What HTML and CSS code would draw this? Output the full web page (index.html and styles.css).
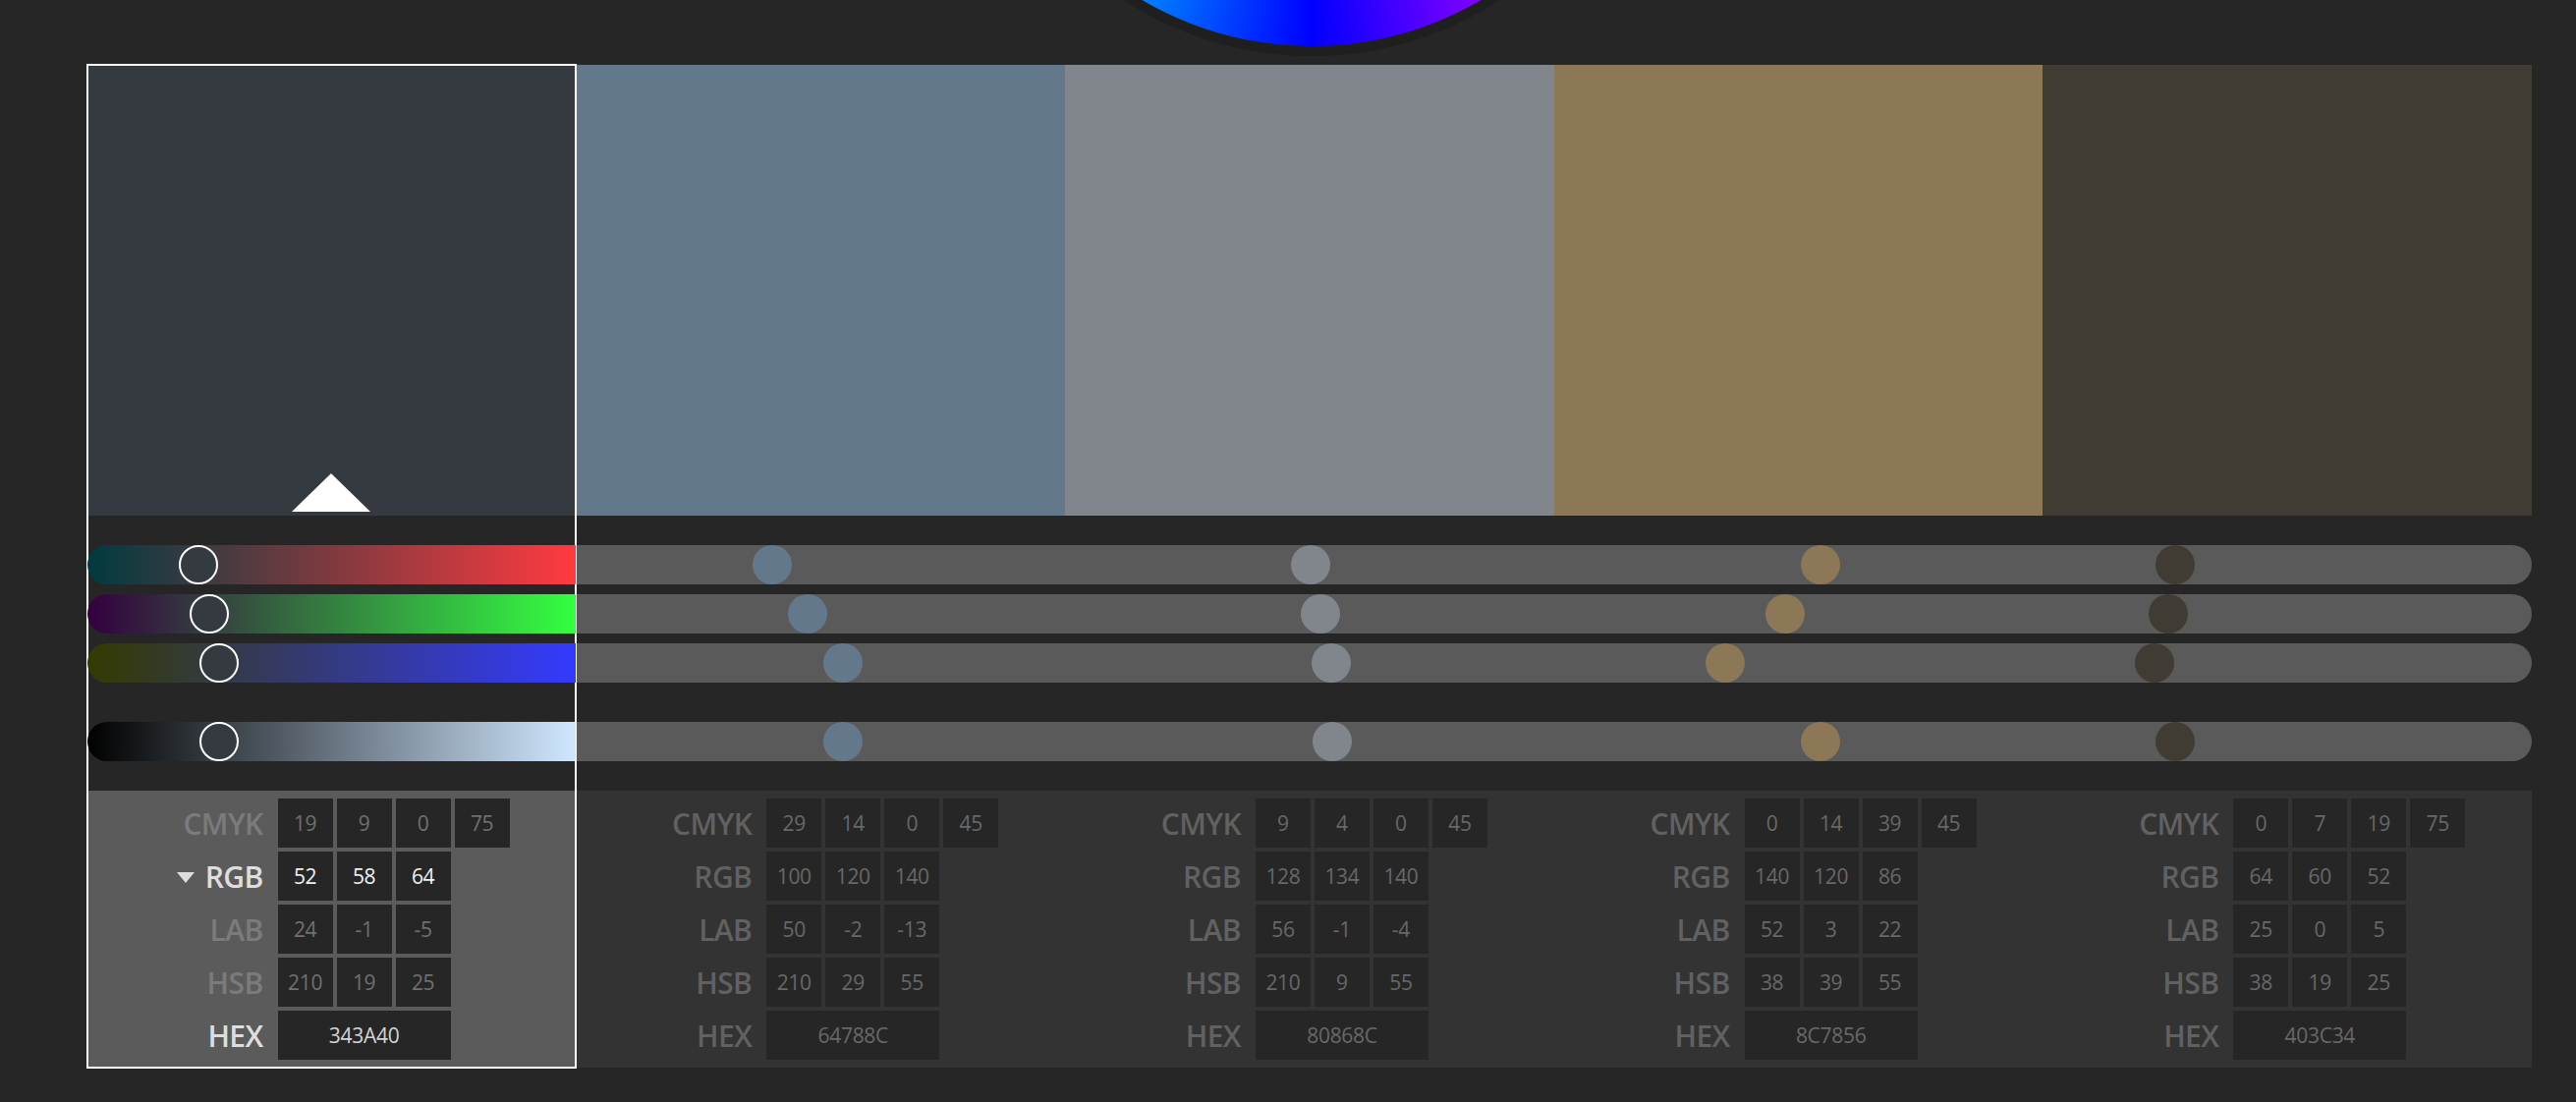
FILE: index.html
```html
<!DOCTYPE html>
<html>
<head>
<meta charset="utf-8">
<link rel="stylesheet" href="styles.css">
</head>
<body>
<div class="wheel"></div>
<div class="palette">

  <div class="col sel" style="--c:#343A40">
    <div class="swatch"><div class="pointer"></div></div>
    <div class="sliders">
      <div class="track" style="background:linear-gradient(to right, rgb(0,58,64), rgb(255,58,64))"><span class="knob" style="left:calc((100% - 40px) * 0.2039)"></span></div>
      <div class="track" style="background:linear-gradient(to right, rgb(52,0,64), rgb(52,255,64))"><span class="knob" style="left:calc((100% - 40px) * 0.2275)"></span></div>
      <div class="track" style="background:linear-gradient(to right, rgb(52,58,0), rgb(52,58,255))"><span class="knob" style="left:calc((100% - 40px) * 0.2510)"></span></div>
      <div class="track lum" style="background:linear-gradient(to right, #000, rgb(207,231,255))"><span class="knob" style="left:calc((100% - 40px) * 0.25)"></span></div>
    </div>
    <div class="panel">
      <div class="lbl">CMYK</div><div class="val">19</div><div class="val">9</div><div class="val">0</div><div class="val">75</div>
      <div class="lbl on"><span class="caret"></span>RGB</div><div class="val on">52</div><div class="val on">58</div><div class="val on">64</div>
      <div class="lbl">LAB</div><div class="val">24</div><div class="val">-1</div><div class="val">-5</div>
      <div class="lbl">HSB</div><div class="val">210</div><div class="val">19</div><div class="val">25</div>
      <div class="lbl on">HEX</div><div class="val hex on">343A40</div>
    </div>
  </div>

  <div class="col" style="--c:#64788C">
    <div class="swatch"></div>
    <div class="sliders">
      <div class="track"><span class="knob" style="left:calc((100% - 40px) * 0.3922)"></span></div>
      <div class="track"><span class="knob" style="left:calc((100% - 40px) * 0.4706)"></span></div>
      <div class="track"><span class="knob" style="left:calc((100% - 40px) * 0.5490)"></span></div>
      <div class="track lum"><span class="knob" style="left:calc((100% - 40px) * 0.55)"></span></div>
    </div>
    <div class="panel">
      <div class="lbl">CMYK</div><div class="val">29</div><div class="val">14</div><div class="val">0</div><div class="val">45</div>
      <div class="lbl">RGB</div><div class="val">100</div><div class="val">120</div><div class="val">140</div>
      <div class="lbl">LAB</div><div class="val">50</div><div class="val">-2</div><div class="val">-13</div>
      <div class="lbl">HSB</div><div class="val">210</div><div class="val">29</div><div class="val">55</div>
      <div class="lbl">HEX</div><div class="val hex">64788C</div>
    </div>
  </div>

  <div class="col" style="--c:#80868C">
    <div class="swatch"></div>
    <div class="sliders">
      <div class="track"><span class="knob" style="left:calc((100% - 40px) * 0.5020)"></span></div>
      <div class="track"><span class="knob" style="left:calc((100% - 40px) * 0.5255)"></span></div>
      <div class="track"><span class="knob" style="left:calc((100% - 40px) * 0.5490)"></span></div>
      <div class="track lum"><span class="knob" style="left:calc((100% - 40px) * 0.55)"></span></div>
    </div>
    <div class="panel">
      <div class="lbl">CMYK</div><div class="val">9</div><div class="val">4</div><div class="val">0</div><div class="val">45</div>
      <div class="lbl">RGB</div><div class="val">128</div><div class="val">134</div><div class="val">140</div>
      <div class="lbl">LAB</div><div class="val">56</div><div class="val">-1</div><div class="val">-4</div>
      <div class="lbl">HSB</div><div class="val">210</div><div class="val">9</div><div class="val">55</div>
      <div class="lbl">HEX</div><div class="val hex">80868C</div>
    </div>
  </div>

  <div class="col" style="--c:#8C7856">
    <div class="swatch"></div>
    <div class="sliders">
      <div class="track"><span class="knob" style="left:calc((100% - 40px) * 0.5490)"></span></div>
      <div class="track"><span class="knob" style="left:calc((100% - 40px) * 0.4706)"></span></div>
      <div class="track"><span class="knob" style="left:calc((100% - 40px) * 0.3373)"></span></div>
      <div class="track lum"><span class="knob" style="left:calc((100% - 40px) * 0.55)"></span></div>
    </div>
    <div class="panel">
      <div class="lbl">CMYK</div><div class="val">0</div><div class="val">14</div><div class="val">39</div><div class="val">45</div>
      <div class="lbl">RGB</div><div class="val">140</div><div class="val">120</div><div class="val">86</div>
      <div class="lbl">LAB</div><div class="val">52</div><div class="val">3</div><div class="val">22</div>
      <div class="lbl">HSB</div><div class="val">38</div><div class="val">39</div><div class="val">55</div>
      <div class="lbl">HEX</div><div class="val hex">8C7856</div>
    </div>
  </div>

  <div class="col" style="--c:#403C34">
    <div class="swatch"></div>
    <div class="sliders">
      <div class="track"><span class="knob" style="left:calc((100% - 40px) * 0.2510)"></span></div>
      <div class="track"><span class="knob" style="left:calc((100% - 40px) * 0.2353)"></span></div>
      <div class="track"><span class="knob" style="left:calc((100% - 40px) * 0.2039)"></span></div>
      <div class="track lum"><span class="knob" style="left:calc((100% - 40px) * 0.25)"></span></div>
    </div>
    <div class="panel">
      <div class="lbl">CMYK</div><div class="val">0</div><div class="val">7</div><div class="val">19</div><div class="val">75</div>
      <div class="lbl">RGB</div><div class="val">64</div><div class="val">60</div><div class="val">52</div>
      <div class="lbl">LAB</div><div class="val">25</div><div class="val">0</div><div class="val">5</div>
      <div class="lbl">HSB</div><div class="val">38</div><div class="val">19</div><div class="val">25</div>
      <div class="lbl">HEX</div><div class="val hex">403C34</div>
    </div>
  </div>

</div>
</body>
</html>
```
FILE: styles.css
```css
html, body {
  margin: 0;
  padding: 0;
}
body {
  width: 2622px;
  height: 1122px;
  overflow: hidden;
  background: #262626;
  font-family: "Open Sans", "Noto Sans", sans-serif;
  position: relative;
}
.wheel {
  position: absolute;
  left: 985px;
  top: -643px;
  width: 680px;
  height: 680px;
  border-radius: 50%;
  border: 10px solid #1f1f1f;
  background:
    radial-gradient(closest-side, #fff 0%, rgba(255,255,255,0) 82%),
    conic-gradient(#ff0 0deg, #f00 60deg, #f0f 120deg, #00f 180deg, #0ff 240deg, #0f0 300deg, #ff0 360deg);
}
.palette {
  display: grid;
  grid-template-columns: repeat(5, 1fr);
  margin: 66px 45px 0 88.6px;
}
.col {
  display: flex;
  flex-direction: column;
  position: relative;
}
.col.sel {
  outline: 2px solid #fff;
  outline-offset: -1px;
  z-index: 2;
}
.swatch {
  height: 459px;
  background: var(--c);
  display: flex;
  justify-content: center;
  align-items: flex-end;
  padding-bottom: 4px;
  box-sizing: border-box;
}
.pointer {
  width: 0;
  height: 0;
  border-left: 40px solid transparent;
  border-right: 40px solid transparent;
  border-bottom: 39px solid #fff;
}
.sliders {
  margin-top: 30px;
  display: flex;
  flex-direction: column;
  gap: 10px;
}
.track {
  height: 40px;
  background: #5a5a5a;
  position: relative;
}
.track.lum {
  margin-top: 30px;
}
.col:first-child .track {
  border-radius: 20px 0 0 20px;
}
.col:last-child .track {
  border-radius: 0 20px 20px 0;
}
.knob {
  position: absolute;
  top: 0;
  width: 40px;
  height: 40px;
  border-radius: 50%;
  background: var(--c);
  box-sizing: border-box;
}
.sel .knob {
  border: 2px solid #fff;
}
.panel {
  margin-top: 30px;
  height: 282px;
  box-sizing: border-box;
  padding: 8px 0;
  background: #333333;
  display: grid;
  grid-template-columns: 190px repeat(4, 56px);
  grid-auto-rows: 50px;
  gap: 4px;
}
.sel .panel {
  background: #5b5b5b;
}
.lbl {
  grid-column: 1;
  display: flex;
  justify-content: flex-end;
  align-items: center;
  padding-right: 11px;
  font-size: 30px;
  font-weight: 600;
  letter-spacing: -0.6px;
  color: #616161;
  gap: 11px;
}
.sel .lbl {
  color: #7b7b7b;
}
.sel .lbl.on {
  color: #dedede;
}
.caret {
  width: 0;
  height: 0;
  border-left: 9.5px solid transparent;
  border-right: 9.5px solid transparent;
  border-top: 11px solid #dedede;
  margin-top: 2px;
}
.val {
  background: #262626;
  display: flex;
  justify-content: center;
  align-items: center;
  font-size: 21px;
  color: #686868;
  letter-spacing: -0.3px;
}
.sel .val {
  color: #707070;
}
.sel .val.on {
  color: #f0f0f0;
}
.sel .val.hex.on {
  color: #d4d4d4;
}
.val.hex {
  grid-column: span 3;
}
```
